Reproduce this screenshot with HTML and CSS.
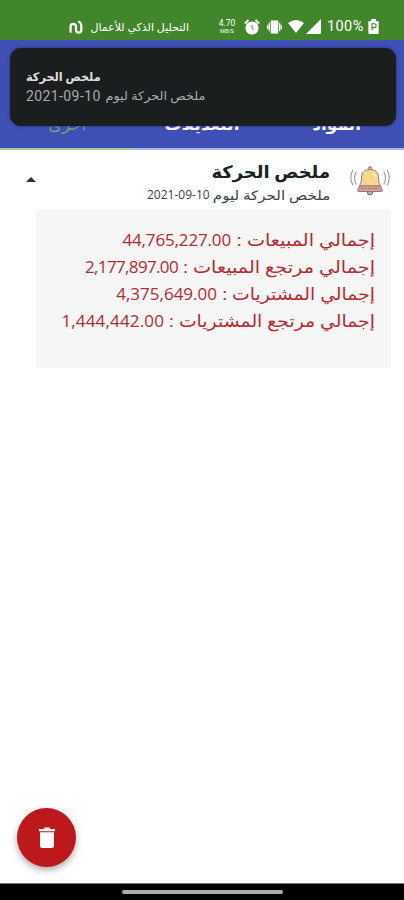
FILE: index.html
```html
<!DOCTYPE html>
<html lang="ar" dir="rtl">
<head>
<meta charset="utf-8">
<title>ملخص الحركة</title>
<link rel="stylesheet" href="styles.css">
</head>
<body>
<header class="status">
  <svg class="battery" viewBox="0 0 11 16"><path fill="#fff" d="M3 2V0h5v2h2q1 0 1 1v12q0 1-1 1H1q-1 0-1-1V3q0-1 1-1z"/><path d="M4 12V5h2.200a2 2 0 0 1 0 4.200H4" fill="none" stroke="#41862a" stroke-width="1.200"/></svg>
  <span class="percent" dir="ltr">100%</span>
  <svg class="signal" viewBox="0 0 15 15"><path fill="#fff" d="M15 0v15H0z"/></svg>
  <svg class="wifi" viewBox="0 0 16 13"><path fill="#fff" d="M0 3Q8-3 16 3L8 13z"/></svg>
  <svg class="vibrate" viewBox="0 0 16 14"><path fill="#fff" d="M4 0h8v14H4z"/><path d="M2.500 2.500v9M.7 4.500v5M13.500 2.500v9M15.300 4.500v5" stroke="#fff" stroke-width="1.400"/></svg>
  <svg class="alarm" viewBox="0 0 16 16"><circle cx="8" cy="9" r="6.600" fill="#fff"/><path d="M.8 4.500 4.500 1M15.200 4.500 11.500 1" stroke="#fff" stroke-width="1.800"/><path d="M8 6v3.500l1.500 1" fill="none" stroke="#41862a" stroke-width=".9"/></svg>
  <span class="speed" dir="ltr"><b>4.70</b><small>MB/S</small></span>
  <span class="appname">التحليل الذكي للأعمال</span>
  <svg class="logo" viewBox="0 0 14 14"><path d="M1.600 12V6.500a2.700 2.700 0 0 1 5.400 0V10a2.600 2.600 0 0 0 5.300 0V5.500Q12.300 2.500 9.800 1.800" fill="none" stroke="#fff" stroke-width="2.200" stroke-linecap="round"/></svg>
</header>
<nav class="tabs">
  <a class="tab"><span>المواد</span></a>
  <a class="tab"><span>التعديلات</span></a>
  <a class="tab active"><span>أخرى</span></a>
</nav>
<aside class="toast">
  <b class="toast-title">ملخص الحركة</b>
  <p class="toast-text"><span class="ar">ملخص الحركة ليوم</span><span class="num" dir="ltr">2021-09-10</span></p>
</aside>
<main>
  <section class="head">
    <svg class="bell" viewBox="0 0 40 30"><g fill="none" stroke="#a49bbd" stroke-width="1.200" stroke-linecap="round"><path d="M6 6q-3 6 0 12M2.800 4q-4 8 0 15M34 6q3 6 0 12M37.200 4q4 8 0 15"/></g><circle cx="20" cy="26" r="2.800" fill="#b9add2" stroke="#73658d"/><circle cx="20" cy="2.500" r="1.700" fill="#e6bd88" stroke="#82718c"/><path d="M9.500 20Q11.500 17 11.500 12C11.500 6 15 3.500 20 3.500S28.500 6 28.500 12Q28.500 17 30.500 20z" fill="#f9d68c" stroke="#8f7a92"/><path d="M9.500 20h21l2 4.500q0 1-1 1h-23q-1 0-1-1z" fill="#d7a083" stroke="#8f7a92"/><path d="M11 22.500h18" stroke="#9d7182" stroke-dasharray="2 1.500"/><path d="M22 7q3 1 3.500 5" fill="none" stroke="#fff1c4" stroke-width="1.500"/></svg>
    <div class="titles">
      <h1>ملخص الحركة</h1>
      <p><span class="ar">ملخص الحركة ليوم</span><span class="num" dir="ltr">2021-09-10</span></p>
    </div>
    <svg class="caret" viewBox="0 0 10 5"><path d="M0 5 5 0l5 5z" fill="#333"/></svg>
  </section>
  <section class="card">
    <p class="l1"><span class="ar">إجمالي المبيعات :</span><span class="num" dir="ltr">44,765,227.00</span></p>
    <p class="l2"><span class="ar">إجمالي مرتجع المبيعات :</span><span class="num" dir="ltr">2,177,897.00</span></p>
    <p class="l3"><span class="ar">إجمالي المشتريات :</span><span class="num" dir="ltr">4,375,649.00</span></p>
    <p class="l4"><span class="ar">إجمالي مرتجع المشتريات :</span><span class="num" dir="ltr">1,444,442.00</span></p>
  </section>
</main>
<button class="fab" aria-label="حذف"><svg viewBox="0 0 16 21"><path fill="#fff" d="M0 2h4.500l1-1.500h5l1 1.500H16v2.200H0zM1 5.200h14V19q0 2-2 2H3q-2 0-2-2z"/></svg></button>
<footer class="navbar"><i></i></footer>
</body>
</html>
```
FILE: styles.css
```css
* { box-sizing: border-box; margin: 0; padding: 0; }
body {
  width: 404px; height: 900px; overflow: hidden; position: relative;
  display: flex; flex-direction: column; background: #fff;
  font-family: "Open Sans", "DejaVu Sans", sans-serif; white-space: nowrap;
}
svg { display: block; flex: none; }
.ar { flex: none; transform-origin: right center; }
.status {
  height: 40px; background: #41862a; color: #fff; flex: none;
  display: flex; align-items: center; padding: 13px 25px 0 0;
}
.battery { width: 11px; height: 15px; }
.percent { width: 37px; margin-right: 4px; font: 14.500px Roboto, sans-serif; letter-spacing: .4px; text-align: left; }
.signal { width: 15px; height: 15px; margin-right: 6px; }
.wifi { width: 16px; height: 13px; margin-right: 2px; }
.vibrate { width: 15px; height: 14px; margin-right: 6px; }
.alarm { width: 16px; height: 16px; margin-right: 7px; }
.speed { width: 20px; margin-right: 7px; display: flex; flex-direction: column; align-items: center; }
.speed b { font: 8.500px/9px Roboto, sans-serif; }
.speed small { font: 5.500px/7px Roboto, sans-serif; }
.appname { width: 100px; margin-right: 28px; font-size: 11px; }
.logo { width: 14px; height: 14px; margin-right: 6px; }
.tabs { height: 110px; background: #3f4fb5; display: flex; flex: none; border-bottom: 2px solid #a3b5ed; }
.tab { flex: 1; display: flex; justify-content: center; align-items: flex-end; padding-bottom: 12px; color: #fff; font-size: 17px; font-weight: bold; line-height: 24px; }
.active { color: #6fa475; font-weight: normal; border-bottom: 2px solid #a7cf98; margin-bottom: -2px; }
.toast {
  position: absolute; left: 10px; top: 48px; width: 386px; height: 78px; border-radius: 11px;
  background: #1b1e1f; color: #ddd; direction: ltr; padding: 19px 16px;
  display: flex; flex-direction: column; align-items: flex-start; box-shadow: 0 0 3px #27306d;
}
.toast-title { font-size: 12px; line-height: 20px; transform: scaleX(.94); transform-origin: left center; }
.toast-text { width: 179px; direction: rtl; display: flex; justify-content: space-between; font-size: 12px; line-height: 18px; color: #aaa; }
.toast-text .ar { transform: scaleX(1.07); }
.toast-text .num { font: 14px/18px Roboto, sans-serif; letter-spacing: .4px; }
.head { height: 60px; display: flex; padding: 16px 14px 0 26px; }
.bell { width: 40px; height: 30px; }
.titles { width: 183px; margin-right: 20px; }
h1 { font-size: 17px; line-height: 24px; color: #172326; margin-top: -6px; transform: scaleX(1.053); transform-origin: right center; }
.titles p { display: flex; justify-content: space-between; font-size: 12px; line-height: 22px; color: #394246; }
.titles .ar { font-size: 13px; transform: scaleX(1.16); }
.caret { width: 10px; height: 5px; margin: 11px auto 0 0; }
.card { margin: 0 13px 0 36px; height: 158px; background: #f6f6f6; color: #b62a30; padding: 16px; }
.card p { display: flex; gap: 5px; line-height: 27px; font-size: 17px; }
.l1 .ar { width: 139px; transform: scaleX(1.13); }
.l2 .ar { width: 192px; transform: scaleX(1.13); }
.l3 .ar { width: 153px; transform: scaleX(1.105); }
.l4 .ar { width: 206px; transform: scaleX(1.108); }
.l1 .num { letter-spacing: -.150px; }
.l2 .num { letter-spacing: -.650px; }
.l4 .num { letter-spacing: .150px; }
.fab {
  position: absolute; left: 17px; top: 808px; width: 59px; height: 59px; border-radius: 50%; border: 0;
  background: #bd191c; display: flex; align-items: center; justify-content: center; box-shadow: 0 3px 7px #0005;
}
.fab svg { width: 16px; height: 21px; }
.navbar { margin-top: auto; height: 17px; background: #000; border-top: 1px solid #777; display: flex; justify-content: center; padding-top: 6px; }
.navbar i { width: 161px; height: 4px; border-radius: 2px; background: #aaa; }
```
